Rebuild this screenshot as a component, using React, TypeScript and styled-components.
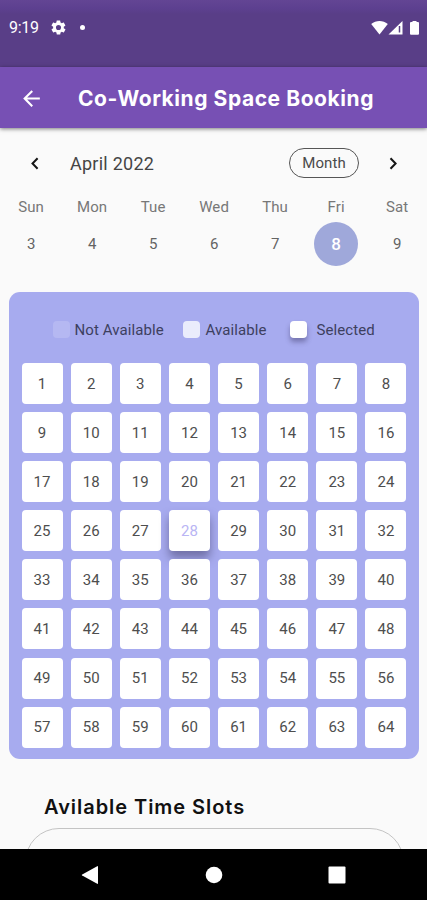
import React from "react";
import styled, { createGlobalStyle } from "styled-components";

const GlobalStyle = createGlobalStyle`
  * { box-sizing: border-box; }
  body { margin: 0; background: #fafafa; font-family: Roboto, sans-serif; }
`;

const Screen = styled.div`
  width: 427px;
  height: 900px;
  display: flex;
  flex-direction: column;
  overflow: hidden;
  background: #fafafa;
`;

const StatusBar = styled.header`
  height: 67px;
  flex: none;
  display: flex;
  align-items: flex-start;
  justify-content: space-between;
  padding: 18px 7px 0 9px;
  color: #fff;
  background: linear-gradient(#634594 0, #5d4090 8px, #593e87 14px);
`;

const StatusGroup = styled.div<{ $gap: number }>`
  display: flex;
  align-items: center;
  height: 19px;
  gap: ${(p) => p.$gap}px;
`;

const Clock = styled.span`
  font-size: 16px;
  line-height: 19px;
  width: 30px;
  letter-spacing: -0.25px;
`;

const Dot = styled.span`
  width: 5px;
  height: 5px;
  margin-left: 2px;
  border-radius: 50%;
  background: #fff;
`;

const SignalIcon = styled.svg`
  margin: 0 2px 0 -2px;
`;

const AppBar = styled.div`
  height: 61px;
  flex: none;
  display: flex;
  align-items: center;
  padding-left: 19px;
  gap: 34px;
  background: #7750b4;
  color: #fff;
  box-shadow: 0 1px 4px rgba(0, 0, 0, 0.5);
  z-index: 1;
`;

const Title = styled.h1`
  margin: 3px 0 0;
  font: 700 21px/30px Inter, sans-serif;
  letter-spacing: 0.56px;
  white-space: nowrap;
`;

const Content = styled.main`
  flex: 1;
  min-height: 0;
  overflow: hidden;
`;

const MonthRow = styled.div`
  height: 30px;
  margin-top: 20px;
  padding: 0 24px 0 25px;
  display: flex;
  align-items: center;
`;

const MonthName = styled.span`
  margin-left: 25px;
  flex: 1;
  font-size: 18px;
  letter-spacing: 0.25px;
  color: #454545;
`;

const MonthButton = styled.button`
  width: 70px;
  height: 30px;
  margin-right: 24px;
  padding: 0;
  border: 1px solid #555;
  border-radius: 15px;
  background: transparent;
  color: #4a4a4a;
  font: 15px Roboto, sans-serif;
  letter-spacing: 0.1px;
`;

const Week = styled.div`
  display: grid;
  grid-template-columns: repeat(7, 61px);
  height: 114px;
  padding: 19px 0 0 0.6px;
`;

const Day = styled.div`
  display: flex;
  flex-direction: column;
  align-items: center;
`;

const DayName = styled.span`
  font-size: 15px;
  line-height: 20px;
  letter-spacing: 0.1px;
  color: #777;
`;

const DayNumber = styled.span<{ $active: boolean }>`
  width: 44px;
  height: 44px;
  margin-top: 5px;
  display: grid;
  place-items: center;
  border-radius: 50%;
  font-size: ${(p) => (p.$active ? 17 : 15)}px;
  font-weight: ${(p) => (p.$active ? 500 : 400)};
  color: ${(p) => (p.$active ? "#fff" : "#636363")};
  background: ${(p) => (p.$active ? "#9fa8da" : "transparent")};
`;

const SeatPanel = styled.section`
  height: 467px;
  margin: 0 8px 0 9px;
  padding: 0 12.5px;
  border-radius: 11px;
  background: #a7abef;
`;

const Legend = styled.div`
  height: 71px;
  padding: 4px 0 0 31px;
  display: flex;
  align-items: center;
`;

const LegendItem = styled.div<{ $gap: number; $width: number }>`
  display: flex;
  align-items: center;
  gap: ${(p) => p.$gap}px;
  width: ${(p) => p.$width}px;
  white-space: nowrap;
  font-size: 15px;
  letter-spacing: 0.1px;
  color: #3d3f60;
`;

const Swatch = styled.span<{ $color: string; $raised?: boolean }>`
  width: 17px;
  height: 17px;
  flex: none;
  border-radius: 4px;
  background: ${(p) => p.$color};
  box-shadow: ${(p) => (p.$raised ? "0 4px 5px rgba(60, 55, 100, 0.45)" : "none")};
`;

const SeatGrid = styled.div`
  display: grid;
  grid-template-columns: repeat(8, 41px);
  grid-auto-rows: 41px;
  justify-content: space-between;
  row-gap: 8.1px;
`;

const Seat = styled.div<{ $selected: boolean }>`
  display: grid;
  place-items: center;
  border-radius: 4px;
  background: #fff;
  font-size: 15px;
  color: ${(p) => (p.$selected ? "#b9b5f4" : "#4e4e4e")};
  box-shadow: ${(p) => (p.$selected ? "0 7px 10px rgba(60, 55, 95, 0.5)" : "none")};
`;

const SlotsTitle = styled.h2`
  margin: 34px 0 0 44px;
  font: 600 20px/28px Inter, sans-serif;
  letter-spacing: 0.95px;
  color: #111;
`;

const SlotsCard = styled.div`
  height: 120px;
  margin: 7px 23px 0 25px;
  border: 1px solid #c4c4c4;
  border-radius: 34px;
`;

const NavBar = styled.nav`
  height: 51px;
  flex: none;
  padding: 0 81px;
  display: flex;
  align-items: center;
  justify-content: space-between;
  background: #000;
  z-index: 1;
`;

const days = ["Sun", "Mon", "Tue", "Wed", "Thu", "Fri", "Sat"];
const seats = Array.from({ length: 64 }, (_, i) => i + 1);

const Chevron = ({ left = false }: { left?: boolean }) => (
  <svg width="20" height="20" viewBox="0 0 20 20" fill="none" stroke="#151515" strokeWidth="2">
    <path d={left ? "M12.6 5.2 7.5 10.5l5.1 5.3" : "M7.5 5.2 12.6 10.5l-5.1 5.3"} />
  </svg>
);

export default function App() {
  return (
    <Screen>
      <GlobalStyle />
      <StatusBar>
        <StatusGroup $gap={11}>
          <Clock>9:19</Clock>
          <svg width="17" height="17" viewBox="0 0 24 24" fill="#fff">
            <path d="M19.4 13c.1-.3.1-.7.1-1s0-.7-.1-1l2.1-1.6c.2-.2.2-.4.1-.6l-2-3.5c-.1-.2-.4-.3-.6-.2l-2.5 1c-.5-.4-1.1-.7-1.7-1l-.4-2.6c0-.3-.2-.5-.5-.5h-4c-.3 0-.4.2-.5.4l-.4 2.7c-.6.2-1.1.6-1.7 1l-2.4-1c-.3-.1-.5 0-.7.2l-2 3.5c-.1.2 0 .5.2.6L4.5 11c0 .3-.1.7-.1 1s0 .7.1 1l-2.1 1.6c-.2.2-.3.4-.1.6l2 3.5c.1.2.3.3.6.2l2.5-1c.5.4 1.1.7 1.7 1l.4 2.6c0 .3.2.5.5.5h4c.3 0 .5-.2.5-.4l.4-2.7c.6-.2 1.1-.6 1.7-1l2.5 1c.2.1.5 0 .6-.2l2-3.5c.1-.2.1-.5-.1-.6zM12 15.6a3.6 3.6 0 1 1 0-7.2 3.6 3.6 0 0 1 0 7.2z" />
          </svg>
          <Dot />
        </StatusGroup>
        <StatusGroup $gap={2}>
          <svg width="17" height="16" viewBox="0 0 17 16" fill="#fff">
            <path d="M.2 4C5-.1 12-.1 16.8 4L8.5 14.5z" />
          </svg>
          <SignalIcon width="15" height="16" viewBox="0 0 15 16">
            <path d="M.5 14.5 14.5 1v13.5z" fill="#fff" />
            <path d="M11.5 6v6.5" stroke="#593e87" strokeWidth="1.5" />
          </SignalIcon>
          <svg width="13" height="16" viewBox="0 0 13 16" fill="#fff">
            <path d="M5.5 1h4v1H11q1 0 1 1v10.7q0 1-1 1H4q-1 0-1-1V3q0-1 1-1h1.5z" />
          </svg>
        </StatusGroup>
      </StatusBar>
      <AppBar>
        <svg width="25" height="27" viewBox="0 -1 24 24" fill="#fff">
          <path d="M20 11H7.83l5.59-5.59L12 4l-8 8 8 8 1.41-1.41L7.83 13H20z" />
        </svg>
        <Title>Co-Working Space Booking</Title>
      </AppBar>
      <Content>
        <MonthRow>
          <Chevron left />
          <MonthName>April 2022</MonthName>
          <MonthButton>Month</MonthButton>
          <Chevron />
        </MonthRow>
        <Week>
          {days.map((name, i) => (
            <Day key={name}>
              <DayName>{name}</DayName>
              <DayNumber $active={name === "Fri"}>{i + 3}</DayNumber>
            </Day>
          ))}
        </Week>
        <SeatPanel>
          <Legend>
            <LegendItem $gap={5} $width={130}>
              <Swatch $color="#b5b8f2" />
              Not Available
            </LegendItem>
            <LegendItem $gap={6} $width={107}>
              <Swatch $color="#eaecfc" />
              Available
            </LegendItem>
            <LegendItem $gap={10} $width={90}>
              <Swatch $color="#fff" $raised />
              Selected
            </LegendItem>
          </Legend>
          <SeatGrid>
            {seats.map((n) => (
              <Seat key={n} $selected={n === 28}>{n}</Seat>
            ))}
          </SeatGrid>
        </SeatPanel>
        <SlotsTitle>Avilable Time Slots</SlotsTitle>
        <SlotsCard />
      </Content>
      <NavBar>
        <svg width="18" height="20" viewBox="0 0 18 20" fill="#fff">
          <path d="M16.2 1.2Q17 .8 17 1.8v16.4q0 1-.8.6L1.2 10.6q-1-.6 0-1.2z" />
        </svg>
        <svg width="18" height="18" viewBox="0 0 18 18" fill="#fff">
          <circle cx="9" cy="9" r="8.3" />
        </svg>
        <svg width="18" height="18" viewBox="0 0 18 18" fill="#fff">
          <rect x=".5" y=".5" width="17" height="17" rx="1" />
        </svg>
      </NavBar>
    </Screen>
  );
}
